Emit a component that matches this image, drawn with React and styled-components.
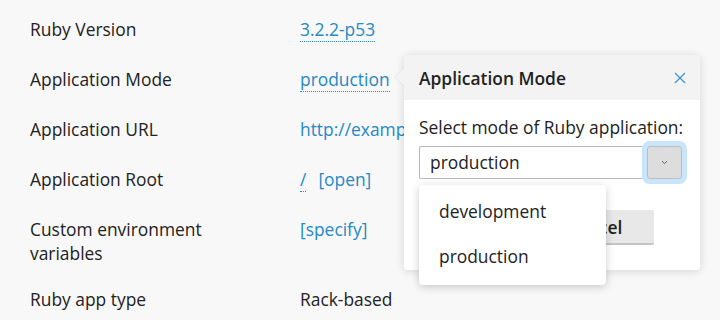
import React from 'react'
import styled, { createGlobalStyle } from 'styled-components'

const GlobalStyle = createGlobalStyle`
  html, body {
    margin: 0;
    padding: 0;
    background: #f8f8f8;
  }
  body {
    font-family: "Open Sans", "DejaVu Sans", sans-serif;
    font-size: 17.4px;
    color: #222;
  }
`

const Page = styled.div`
  position: relative;
  height: 320px;
  overflow: hidden;
  padding: 4px 0 0 30px;
  box-sizing: border-box;
`

const Row = styled.div`
  display: grid;
  grid-template-columns: 270px 1fr;
  align-items: start;
  line-height: 24px;
`

const Label = styled.div`
  padding: 13px 0 9px;
`

const Value = styled.div`
  padding: 13px 0;
  white-space: nowrap;
`

const Link = styled.a`
  color: #2489c5;
  text-decoration: none;
  cursor: pointer;
  border-bottom: ${p => (p.$dotted ? '1px dotted #2489c5' : 'none')};
  & + & {
    margin-left: ${p => p.$gap || 0}px;
  }
`

const Popover = styled.div`
  position: absolute;
  left: 404px;
  top: 55px;
  width: 296px;
  background: #fff;
  border-radius: 3px;
  box-shadow: 0 1px 10px rgba(0, 0, 0, 0.14);

  &::before {
    content: '';
    position: absolute;
    left: -10px;
    top: 12px;
    border-style: solid;
    border-width: 10px 10px 10px 0;
    border-color: transparent rgba(0, 0, 0, 0.05) transparent transparent;
  }
  &::after {
    content: '';
    position: absolute;
    left: -9px;
    top: 13px;
    border-style: solid;
    border-width: 9px 9px 9px 0;
    border-color: transparent #f3f3f3 transparent transparent;
  }
`

const Header = styled.div`
  height: 45px;
  padding: 0 15px;
  display: flex;
  align-items: center;
  justify-content: space-between;
  background: #f3f3f3;
  border-radius: 3px 3px 0 0;
`

const Title = styled.h3`
  margin: 0;
  font-size: 17.4px;
  font-weight: 600;
  line-height: 24px;
`

const Close = styled.button`
  border: 0;
  background: none;
  padding: 0;
  margin-right: -2px;
  width: 14px;
  height: 14px;
  display: flex;
  align-items: center;
  justify-content: center;
  cursor: pointer;
`

const Body = styled.div`
  padding: 15px 15px 25px;
`

const FieldLabel = styled.div`
  line-height: 24px;
  margin-bottom: 7px;
  white-space: nowrap;
`

const SelectWrap = styled.div`
  position: relative;
  display: flex;
  width: 263px;
  height: 33px;
`

const SelectField = styled.div`
  flex: 1;
  background: #fff;
  border: 1px solid #b8b8b8;
  border-right: 0;
  border-radius: 2px 0 0 2px;
  padding-left: 10px;
  line-height: 31px;
`

const SelectButton = styled.button`
  width: 35px;
  height: 33px;
  padding: 0;
  border: 1px solid #bdbdbd;
  background: #dddddd;
  display: flex;
  align-items: center;
  justify-content: center;
  box-shadow: 0 0 0 5px #c8e5fb;
  border-radius: 3px;
`

const Menu = styled.ul`
  position: absolute;
  left: 0;
  top: calc(100% + 6px);
  width: 187px;
  margin: 0;
  padding: 4px 0 6px;
  list-style: none;
  background: #fff;
  border-radius: 4px;
  box-shadow: 0 2px 9px rgba(0, 0, 0, 0.2);
  z-index: 2;
`

const MenuItem = styled.li`
  padding: 10px 20px;
  line-height: 25px;
`

const Actions = styled.div`
  display: flex;
  gap: 10px;
  margin-top: 31px;
`

const Button = styled.button`
  width: ${p => p.$width}px;
  height: 35px;
  font-family: inherit;
  font-size: 17.4px;
  font-weight: 600;
  color: #222;
  background: #e8e8e8;
  border: 0;
  border-bottom: 2px solid #c4c4c4;
  border-radius: 2px;
`

const rows = [
  { label: 'Ruby Version', value: <Link $dotted>3.2.2-p53</Link> },
  { label: 'Application Mode', value: <Link $dotted>production</Link> },
  { label: 'Application URL', value: <Link>http://example.com/</Link> },
  {
    label: 'Application Root',
    value: (
      <>
        <Link $dotted>/</Link>
        <Link $gap={12}>[open]</Link>
      </>
    )
  },
  { label: <>Custom environment<br />variables</>, value: <Link>[specify]</Link> },
  { label: 'Ruby app type', value: 'Rack-based' }
]

export default function App () {
  return (
    <Page>
      <GlobalStyle />
      {rows.map((r, i) => (
        <Row key={i}>
          <Label>{r.label}</Label>
          <Value>{r.value}</Value>
        </Row>
      ))}

      <Popover>
        <Header>
          <Title>Application Mode</Title>
          <Close aria-label="Close">
            <svg width="12" height="12" viewBox="0 0 12 12">
              <path d="M1 1L11 11M11 1L1 11" stroke="#3d96d0" strokeWidth="1.3" fill="none" />
            </svg>
          </Close>
        </Header>
        <Body>
          <FieldLabel>Select mode of Ruby application:</FieldLabel>
          <SelectWrap>
            <SelectField>production</SelectField>
            <SelectButton>
              <svg width="7" height="5" viewBox="0 0 7 5">
                <path d="M1 1.2L3.5 3.6L6 1.2" stroke="#666" strokeWidth="1" fill="none" />
              </svg>
            </SelectButton>
            <Menu>
              <MenuItem>development</MenuItem>
              <MenuItem>production</MenuItem>
            </Menu>
          </SelectWrap>
          <Actions>
            <Button $width={106}>OK</Button>
            <Button $width={119}>Cancel</Button>
          </Actions>
        </Body>
      </Popover>
    </Page>
  )
}
